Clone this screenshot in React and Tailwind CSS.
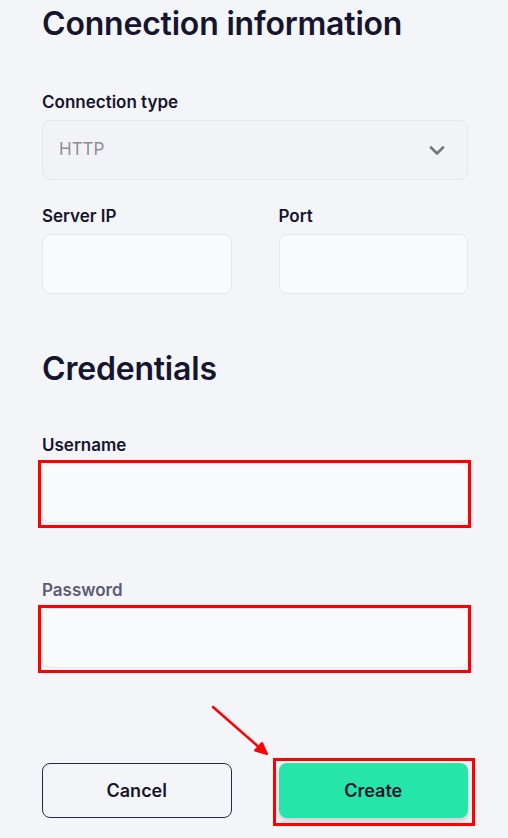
import React from "react";

const font = { fontFamily: "Inter, 'Noto Sans', sans-serif" };

function RedBox({ className }) {
  return <span className={`pointer-events-none absolute border-[3px] border-[#ff0000] ${className}`} />;
}

function Field({ label, muted, highlight }) {
  return (
    <div className="flex flex-col">
      <label className={`text-[17px] font-semibold leading-[22px] ${muted ? "text-[#5c5c72]" : "text-[#16152e]"}`}>
        {label}
      </label>
      <div className="relative mt-[7px]">
        <input
          type="text"
          className="h-[60px] w-full rounded-[8px] border border-[#e6e8ee] bg-[#f9fafc] px-4 outline-none"
        />
        {highlight && <RedBox className="-bottom-[5px] -left-[4px] -right-[3px] -top-[3px]" />}
      </div>
    </div>
  );
}

export default function App() {
  return (
    <div style={font} className="relative min-h-[838px] w-[508px] bg-[#f4f5f9] pl-[42px] pr-[40px] pt-[4px] text-[#16152e]">
      <h1 className="text-[32px] font-semibold leading-[40px] tracking-[-0.2px]">Connection information</h1>

      <div className="mt-[47px] flex flex-col">
        <label className="text-[17px] font-semibold leading-[22px]">Connection type</label>
        <div className="mt-[7px] flex h-[60px] items-center justify-between rounded-[8px] border border-[#e6e8ee] bg-[#f2f3f7] pl-[16px] pr-[22px]">
          <span className="text-[17px] text-[#8d8d93]">HTTP</span>
          <svg width="16" height="9" viewBox="0 0 16 9" fill="none">
            <path d="M2 1.5l6 6 6-6" stroke="#76767c" strokeWidth="2.6" strokeLinecap="round" strokeLinejoin="round" />
          </svg>
        </div>
      </div>

      <div className="mt-[25px] grid grid-cols-2 gap-x-[47px]">
        <Field label="Server IP" />
        <Field label="Port" />
      </div>

      <h2 className="mt-[55px] text-[32px] font-semibold leading-[40px] tracking-[-0.2px]">Credentials</h2>

      <div className="mt-[45px]">
        <Field label="Username" highlight />
      </div>

      <div className="mt-[56px]">
        <Field label="Password" muted highlight />
      </div>

      <div className="mt-[95px] grid grid-cols-2 gap-x-[47px]">
        <button className="h-[55px] rounded-[8px] border-[1.5px] border-[#2a2a3e] bg-transparent text-[18px] font-semibold text-[#16152e]">
          Cancel
        </button>
        <div className="relative">
          <button className="h-[55px] w-full rounded-[8px] bg-[#26e5a8] text-[18px] font-semibold text-[#16152e] shadow-[0_3px_6px_rgba(0,0,0,0.18)]">
            Create
          </button>
          <RedBox className="-bottom-[8px] -left-[6px] -right-[7px] -top-[5px]" />
        </div>
      </div>

      <svg className="absolute left-[205px] top-[700px]" width="70" height="60" viewBox="0 0 70 60" fill="none">
        <path d="M8 7L56 49" stroke="#ff0000" strokeWidth="2.5" strokeLinecap="round" />
        <path d="M62 54L50 50.5L57 43Z" fill="#ff0000" stroke="#ff0000" strokeWidth="2" strokeLinejoin="round" />
      </svg>
    </div>
  );
}
